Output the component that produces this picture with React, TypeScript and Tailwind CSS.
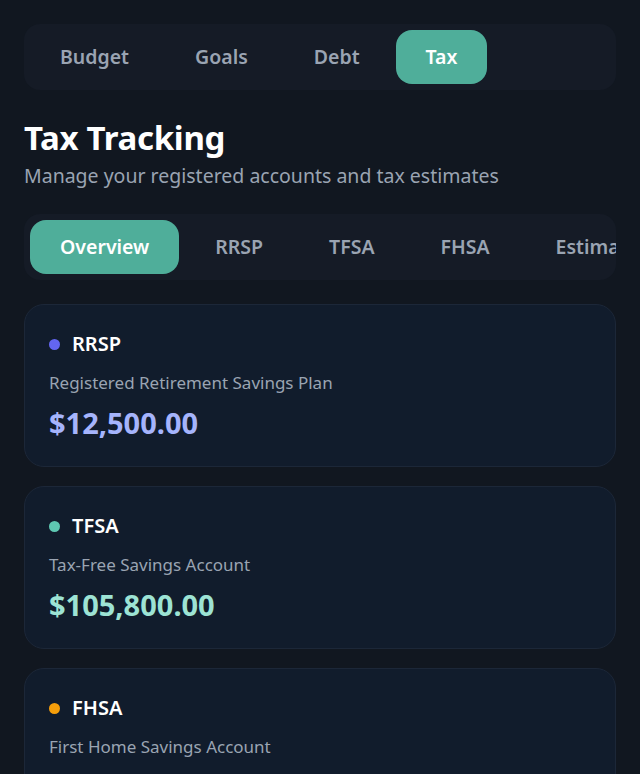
const sections = ["Budget", "Goals", "Debt", "Tax"]
const taxTabs = ["Overview", "RRSP", "TFSA", "FHSA", "Estimates"]

interface Account {
  code: string
  name: string
  balance: string
  dot: string
  amount: string
}

const accounts: Account[] = [
  {
    code: "RRSP",
    name: "Registered Retirement Savings Plan",
    balance: "$12,500.00",
    dot: "bg-[#6366f1]",
    amount: "text-[#a5b4fc]",
  },
  {
    code: "TFSA",
    name: "Tax-Free Savings Account",
    balance: "$105,800.00",
    dot: "bg-[#5ec7b2]",
    amount: "text-[#9de3d4]",
  },
  {
    code: "FHSA",
    name: "First Home Savings Account",
    balance: "$8,000.00",
    dot: "bg-[#f59e0b]",
    amount: "text-[#fcd34d]",
  },
]

function TabBar({ items, active }: { items: string[]; active: string }) {
  return (
    <div className="flex gap-1.5 overflow-hidden rounded-2xl bg-[#151b26] p-1.5">
      {items.map((item) => (
        <button
          key={item}
          className={
            item === active
              ? "h-[54px] shrink-0 rounded-2xl bg-[#4fae9a] px-[30px] text-[19.5px] font-semibold text-white"
              : "h-[54px] shrink-0 rounded-2xl px-[30px] text-[19.5px] font-semibold text-[#9aa4b2]"
          }
        >
          {item}
        </button>
      ))}
    </div>
  )
}

function AccountCard({ account }: { account: Account }) {
  return (
    <div className="rounded-[20px] border border-[#1c2738] bg-[#111c2c] px-6 pt-[25px] pb-[25px]">
      <div className="flex items-center gap-3">
        <span className={`h-[11px] w-[11px] rounded-full ${account.dot}`} />
        <span className="text-[20px] font-semibold leading-7 text-white">{account.code}</span>
      </div>
      <p className="mt-[13px] text-[17px] leading-6 text-[#9aa4b2]">{account.name}</p>
      <p className={`mt-2.5 text-[29px] font-bold leading-9 ${account.amount}`}>{account.balance}</p>
    </div>
  )
}

export default function App() {
  return (
    <main
      className="min-h-screen bg-[#111720] p-6"
      style={{ fontFamily: '"Noto Sans", "Open Sans", sans-serif' }}
    >
      <TabBar items={sections} active="Tax" />

      <h1 className="mt-7 text-[33px] font-bold leading-10 tracking-[-0.3px] text-white">Tax Tracking</h1>
      <p className="mt-1 text-[19.5px] leading-7 text-[#9aa4b2]">Manage your registered accounts and tax estimates</p>

      <div className="mt-6">
        <TabBar items={taxTabs} active="Overview" />
      </div>

      <div className="mt-6 flex flex-col gap-[19px]">
        {accounts.map((account) => (
          <AccountCard key={account.code} account={account} />
        ))}
      </div>
    </main>
  )
}
